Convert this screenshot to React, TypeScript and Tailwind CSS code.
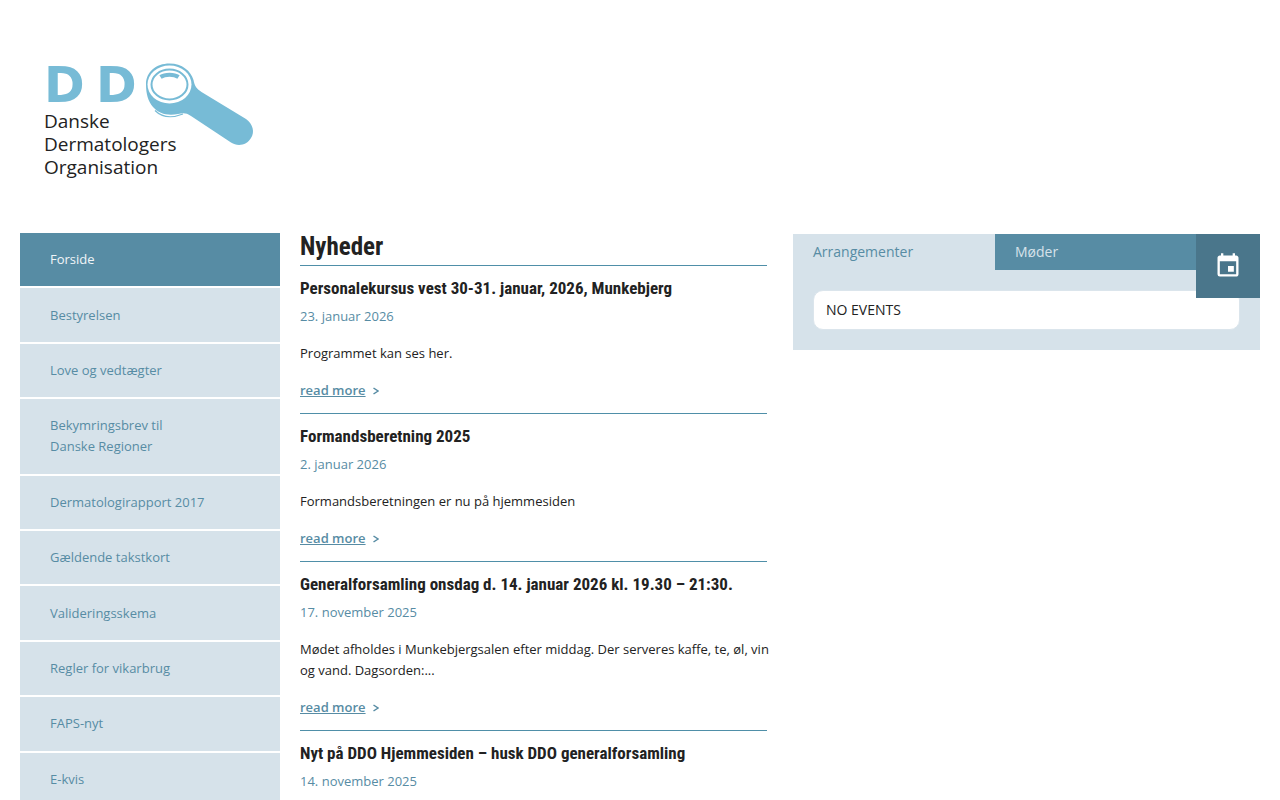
import { useState } from "react";
import { MdEvent } from "react-icons/md";

const menu = [
  "Forside",
  "Bestyrelsen",
  "Love og vedtægter",
  "Bekymringsbrev til Danske Regioner",
  "Dermatologirapport 2017",
  "Gældende takstkort",
  "Valideringsskema",
  "Regler for vikarbrug",
  "FAPS-nyt",
  "E-kvis",
];

type Article = { title: string; date: string; excerpt?: string };

const articles: Article[] = [
  {
    title: "Personalekursus vest 30-31. januar, 2026, Munkebjerg",
    date: "23. januar 2026",
    excerpt: "Programmet kan ses her.",
  },
  {
    title: "Formandsberetning 2025",
    date: "2. januar 2026",
    excerpt: "Formandsberetningen er nu på hjemmesiden",
  },
  {
    title: "Generalforsamling onsdag d. 14. januar 2026 kl. 19.30 – 21:30.",
    date: "17. november 2025",
    excerpt:
      "Mødet afholdes i Munkebjergsalen efter middag. Der serveres kaffe, te, øl, vin og vand. Dagsorden:...",
  },
  {
    title: "Nyt på DDO Hjemmesiden – husk DDO generalforsamling",
    date: "14. november 2025",
  },
];

function Logo() {
  return (
    <svg width="214" height="132" viewBox="0 -12 214 132" role="img" aria-label="Danske Dermatologers Organisation">
      <g className="fill-[#77bbd6] font-['DejaVu_Sans'] text-[49px] font-bold">
        <text x="0" y="40">D</text>
        <text x="52" y="40">D</text>
      </g>
      {/* Dermatoscope: handle and head, then the two lens rings */}
      <path
        d="M125.500 1.500 C138 1.500 147 9 149.500 18 C150.500 24 153 27 157.500 30 L202 57 C209 62 211 70 207 76 C203 83 194 85 187 80.500 L147 54 C142 50.500 139 51 134 52 C124 54 115 52 109 45 C104 39 102 32 102 22 C102 10 112 1.500 125.500 1.500 Z"
        fill="#77bbd6"
      />
      <path d="M111 48.500 C119 56.500 130 55.500 139 52" fill="none" stroke="#77bbd6" strokeWidth="1.200" />
      <ellipse cx="125.500" cy="22.500" rx="22" ry="19" fill="#fff" />
      <ellipse cx="125.500" cy="22.500" rx="18" ry="15" fill="#fff" stroke="#77bbd6" strokeWidth="2" />
      <path d="M116.500 15 C121 12 130 12 134.500 15" fill="none" stroke="#77bbd6" strokeWidth="4" />
      <g className="fill-[#222] font-['Open_Sans'] text-[19px]">
        <text x="0" y="66">Danske</text>
        <text x="0" y="89">Dermatologers</text>
        <text x="0" y="112">Organisation</text>
      </g>
    </svg>
  );
}

function NewsItem({ title, date, excerpt }: Article) {
  return (
    <article className="border-t border-[#4f8fa8] pt-[10px] pb-3">
      <h2 className="font-['Roboto_Condensed',Roboto,sans-serif] text-[17px] leading-6 font-bold">
        {title}
      </h2>
      <p className="mt-[6px] text-[#578ca4]">{date}</p>
      {excerpt && (
        <>
          <p className="mt-4 -mr-3">{excerpt}</p>
          <p className="mt-4 flex items-center gap-[7px] text-[#578ca4]">
            <a href="#" className="font-semibold underline">
              read more
            </a>
            <svg width="6" height="8" viewBox="0 0 6 8" fill="none" stroke="currentColor" strokeWidth="1.500" aria-hidden="true">
              <path d="M0.500 1 L5 4 L0.500 7" />
            </svg>
          </p>
        </>
      )}
    </article>
  );
}

function Events() {
  const [tab, setTab] = useState(0);
  return (
    <section className="relative bg-[#d6e2ea] text-sm">
      <div role="tablist" className="grid h-9 grid-cols-[202px_1fr]">
        {["Arrangementer", "Møder"].map((label, i) => (
          <button
            key={label}
            type="button"
            role="tab"
            aria-selected={tab === i}
            onClick={() => setTab(i)}
            className={
              tab === i
                ? "bg-[#d6e2ea] px-5 text-left text-[#578ca4]"
                : "bg-[#578ca4] px-5 text-left text-[#d6e2ea]"
            }
          >
            {label}
          </button>
        ))}
      </div>
      <div className="absolute top-0 right-0 flex size-16 items-center justify-center bg-[#4a768b] text-white">
        <MdEvent size={28} />
      </div>
      <div role="tabpanel" className="p-5">
        <p className="rounded-[10px] border border-[#dbe5ec] bg-white px-3 py-[9px] leading-5 text-[#222]">NO EVENTS</p>
      </div>
    </section>
  );
}

export default function App() {
  return (
    <div className="bg-white px-5 font-['Open_Sans','Noto_Sans',sans-serif] text-[13px] leading-[21px] text-[#222]">
      <header className="px-6 pt-[50px] pb-[51px]">
        <a href="#" className="block w-fit">
          <Logo />
        </a>
      </header>
      <div className="flex gap-5">
        <nav className="w-[260px] shrink-0">
          <ul className="grid h-full gap-[2px]">
            {menu.map((item, i) => (
              <li key={item} className="grid">
                <a
                  href="#"
                  className={
                    i === 0
                      ? "flex items-center bg-[#578ca4] px-[30px] py-4 text-[#f0f5f8]"
                      : "flex items-center bg-[#d6e2ea] px-[30px] py-4 text-[#578ca4]"
                  }
                >
                  <span className="max-w-[160px]">{item}</span>
                </a>
              </li>
            ))}
          </ul>
        </nav>
        <div className="grid flex-1 grid-cols-2 items-start gap-[26px]">
          <main className="pb-[2px]">
            <h1 className="pb-1 font-['Roboto_Condensed',Roboto,sans-serif] text-[25px] leading-7 font-bold">
              Nyheder
            </h1>
            {articles.map((article) => (
              <NewsItem key={article.title} {...article} />
            ))}
          </main>
          <aside className="pt-px">
            <Events />
          </aside>
        </div>
      </div>
    </div>
  );
}
